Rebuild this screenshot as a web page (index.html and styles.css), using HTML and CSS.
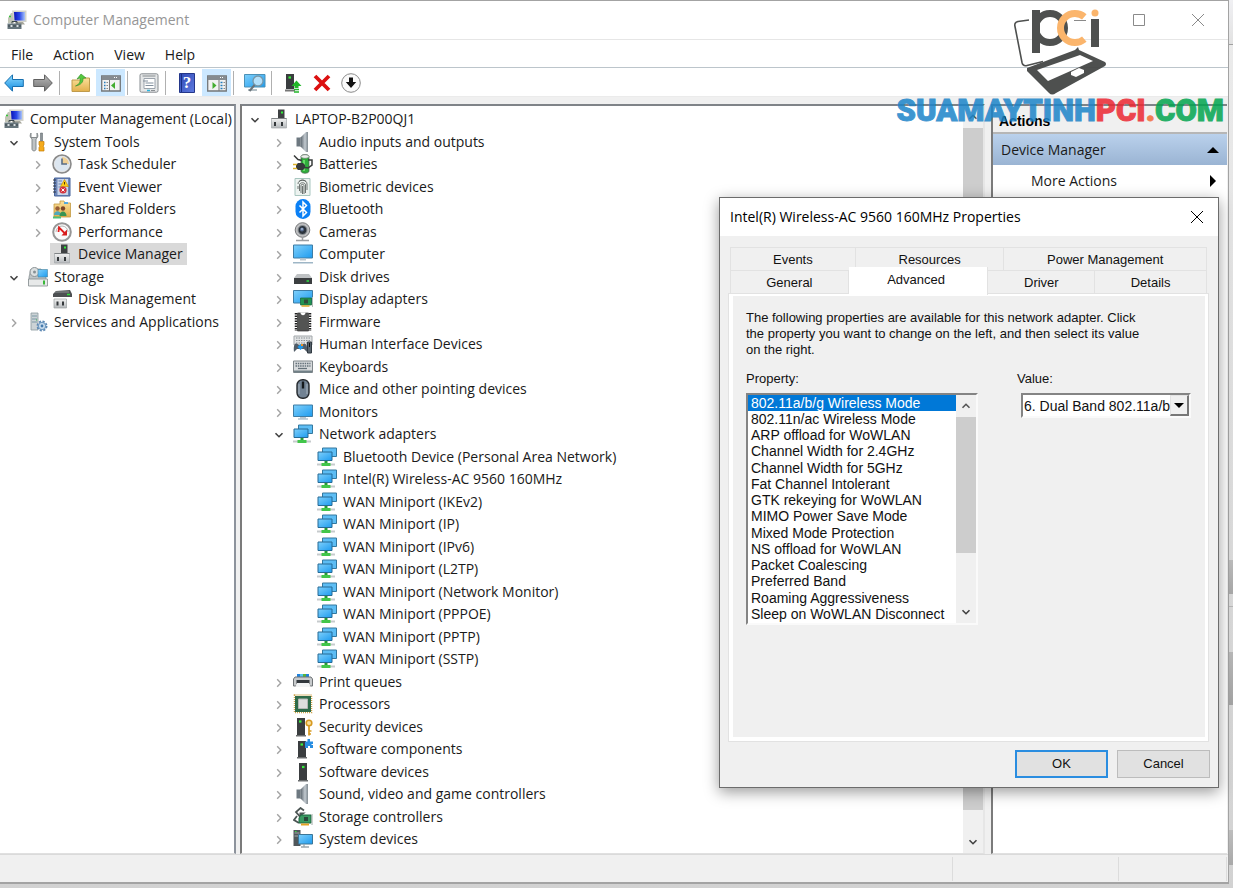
FILE: index.html
```html
<!DOCTYPE html>
<html lang="en">
<head>
<meta charset="utf-8">
<title>Computer Management</title>
<link rel="stylesheet" href="styles.css">
</head>
<body>
<svg class="sprite" aria-hidden="true">
  <defs>
    <linearGradient id="g-screen" x1="0" y1="0" x2="1" y2="1"><stop offset="0" stop-color="#7fd0fb"/><stop offset="1" stop-color="#1d9bef"/></linearGradient>
    <linearGradient id="g-navy" x1="0" y1="0" x2="1" y2="0"><stop offset="0" stop-color="#0a14b8"/><stop offset=".5" stop-color="#2b48e8"/><stop offset="1" stop-color="#a9c4f8"/></linearGradient>
    <linearGradient id="g-metal" x1="0" y1="0" x2="1" y2="0"><stop offset="0" stop-color="#59636b"/><stop offset=".6" stop-color="#c3cad0"/><stop offset="1" stop-color="#7b868e"/></linearGradient>
    <linearGradient id="g-silver" x1="0" y1="0" x2="0" y2="1"><stop offset="0" stop-color="#f2f2f2"/><stop offset="1" stop-color="#b4b8bb"/></linearGradient>
    <linearGradient id="g-folder" x1="0" y1="0" x2="0" y2="1"><stop offset="0" stop-color="#fbe09a"/><stop offset="1" stop-color="#e2b04c"/></linearGradient>
    <linearGradient id="g-arrow" x1="0" y1="0" x2="0" y2="1"><stop offset="0" stop-color="#8fdcff"/><stop offset="1" stop-color="#128be0"/></linearGradient>
    <linearGradient id="g-grey" x1="0" y1="0" x2="0" y2="1"><stop offset="0" stop-color="#b9b9b9"/><stop offset="1" stop-color="#727272"/></linearGradient>
    <linearGradient id="g-help" x1="0" y1="0" x2="1" y2="1"><stop offset="0" stop-color="#2f49b5"/><stop offset="1" stop-color="#5f7be0"/></linearGradient>
  </defs>
  <symbol id="i-right" viewBox="0 0 10 10"><path d="M3.2 1.3 6.8 5 3.2 8.700" fill="none" stroke="#a3a3a3" stroke-width="1.4"/></symbol>
  <symbol id="i-down" viewBox="0 0 10 10"><path d="M1.5 3.2 5 6.7 8.5 3.2" fill="none" stroke="#404040" stroke-width="1.6"/></symbol>
  <symbol id="i-up" viewBox="0 0 10 10"><path d="M1.5 6.8 5 3.3 8.5 6.8" fill="none" stroke="#555" stroke-width="1.6"/></symbol>
  <symbol id="i-mgmt" viewBox="0 0 20 20"><path d="M1 8 4 3h3v10H1z" fill="#c2c5b6"/><path d="M2 6.5h2" stroke="#35c43a" stroke-width="1.5"/><path d="M5 .5h14.5v11.500H7z" fill="#d3d3cb"/><path d="M7 2h11v8.500H7.500z" fill="url(#g-navy)"/><path d="M8 12h8l2 2.500H9z" fill="#a6a69b"/><path d="M.5 13.500h14V19H.5z" fill="#66757c"/><path d="M5 13.500v-2h5v2M1 16h13" stroke="#39454b" fill="none"/><path d="M3.500 15h2v2h-2zM9.500 15h2v2h-2z" fill="#d9dfe2"/></symbol>
  <symbol id="i-tools" viewBox="0 0 20 20"><path d="M3 1c-1 2-1.500 4 1 6v10c0 2.500 4 2.500 4 0V7c2.500-2 2-4 1-6v4.500H3z" fill="#bfc3c5" stroke="#7c8183" stroke-width=".9"/><path d="M12.500 1h2v8h-2z" fill="#8d9499" stroke="#555c60" stroke-width=".5"/><path d="M11 9.500h5V13l-1 1 1 1.500V19h-5v-3.500l1-1.500-1-1z" fill="#f5ab1c" stroke="#c67d00" stroke-width=".7"/></symbol>
  <symbol id="i-clock" viewBox="0 0 20 20"><circle cx="10" cy="10" r="8.800" fill="#dce6f0" stroke="#8a8a8a" stroke-width="2"/><circle cx="10" cy="10" r="7.700" fill="none" stroke="#eee" stroke-width=".8"/><path d="M10 10V3a7 7 0 0 1 7 7z" fill="#f0cf94"/><path d="M10 4.500V10h5" fill="none" stroke="#5a6d85" stroke-width="1.600"/></symbol>
  <symbol id="i-event" viewBox="0 0 20 20"><path d="M2.500 1h15.500v18H2.500z" fill="#6e87b9" stroke="#47649c"/><path d="M5.500 2H16v16H5.500z" fill="#c8d4e9"/><path d="M6.500 4H10M6.500 7H10M6.500 10H9" stroke="#6683b2"/><path d="m12.500 2.500 4 7h-8z" fill="#ffcd16" stroke="#c18a00" stroke-width=".6"/><path d="M12.500 5v2.500" stroke="#533b00"/><circle cx="11" cy="13" r="3.600" fill="#d5333e"/><path d="m9.500 11.500 3 3m0-3-3 3" stroke="#fff"/><path d="M1 3h3M1 6h3M1 9h3M1 12h3M1 15h3" stroke="#303744"/></symbol>
  <symbol id="i-shared" viewBox="0 0 20 20"><path d="M2 5h6V2h4l1 2h5.500v14H2z" fill="url(#g-folder)" stroke="#c39a43" stroke-width=".8"/><path d="M12 3h4v2h-4z" fill="#56aadc"/><circle cx="5.500" cy="9.500" r="2.200" fill="#985e37"/><circle cx="11" cy="9.500" r="2.200" fill="#7c4527"/><path d="M2 16c0-5 7-5 7 0z" fill="#50a7bb"/><path d="M7.500 17c0-6 7-6 7 0z" fill="#379452"/><path d="M1 18.500h8" stroke="#4fbf77" stroke-width="2"/></symbol>
  <symbol id="i-perf" viewBox="0 0 20 20"><circle cx="10" cy="10" r="8.800" fill="#fafafa" stroke="#969696" stroke-width="2"/><path d="M4 10a6 6 0 1 1 12 0" fill="none" stroke="#b3b3b3"/><path d="m6.500 10 .5-4.500 6 6" fill="none" stroke="#e11c1c" stroke-width="1.800"/><path d="M9.500 13.500H15V7.500z" fill="#d71b1b"/></symbol>
  <symbol id="i-device" viewBox="0 0 20 20"><path d="M9 .5h6.500V10H9z" fill="#3e4143"/><path d="M12 3.500h2" stroke="#30ee39" stroke-width="2"/><path d="M2.500 9.500h15V19h-15z" fill="url(#g-silver)" stroke="#a4a8aa" stroke-width=".7"/><path d="M2.500 9.500h15" stroke="#808486"/><path d="M5 13h2v4H5zM12 13h2v4h-2z" fill="#34383b"/></symbol>
  <symbol id="i-storage" viewBox="0 0 20 20"><path d="M3 2h10l5 9v6H1v-7z" fill="#bdc4c7" stroke="#82898c" stroke-width=".7"/><circle cx="6.500" cy="5" r="4.500" fill="#dce0e1" stroke="#8b9295"/><circle cx="6.500" cy="5" r="1.500" fill="#869095"/><path d="M10 2.500h9.500v7.500H10z" fill="url(#g-screen)" stroke="#48839d" stroke-width=".6"/><path d="M.5 12h19v7H.5z" fill="#e7e9e9" stroke="#848b8e" stroke-width=".8"/><path d="M16 13.500v4" stroke="#39b839" stroke-width="2"/></symbol>
  <symbol id="i-disk" viewBox="0 0 20 20"><path d="m4 2 14-1 2 4v3H1V5z" fill="#4d5052"/><path d="M3 3h14" stroke="#8e9293"/><path d="M15 5.500h3" stroke="#31e13c" stroke-width="1.500"/><path d="M2 10h12.500v9H2z" fill="url(#g-silver)" stroke="#9ba0a2" stroke-width=".7"/><path d="M4.500 12.500h2v4h-2zM10 12.500h2v4h-2z" fill="#34383b"/></symbol>
  <symbol id="i-services" viewBox="0 0 20 20"><path d="M3 1h7v17H3z" fill="#ccd3d6" stroke="#8b999f" stroke-width=".8"/><path d="M4 4h5M4 7h5M4 10h5" stroke="#7a98a5"/><path d="M8 8h1" stroke="#38bd4b"/><circle cx="14" cy="14" r="4.300" fill="#b7d0e7" stroke="#5d88b3" stroke-width="2.400" stroke-dasharray="2 1.370"/><circle cx="14" cy="14" r="3.600" fill="#c9dced" stroke="#709ac1"/><circle cx="14" cy="14" r="1.400" fill="#477bad"/></symbol>
  <symbol id="i-audio" viewBox="0 0 20 20"><path d="M3.500 5.500h4v9h-4z" fill="#6d7880"/><path d="m7.500 5.500 5.500-5.500h2v20h-2l-5.500-5.500z" fill="url(#g-metal)"/><path d="M14.500 0v20" stroke="#8c959b"/></symbol>
  <symbol id="i-battery" viewBox="0 0 20 20"><path d="M8 2.500C8 0 16 0 16 2.500V17c0 3-8 3-8 0z" fill="#2fac3b" stroke="#4a6150" stroke-width=".7"/><ellipse cx="12" cy="2.500" rx="4" ry="1.800" fill="#edf2ed" stroke="#777" stroke-width=".6"/><path d="M11 6v11" stroke="#7aea77" stroke-width="1.500"/><path d="M1 1.500l4 4 4 1M15 6h4v5l-4 3-5-1" fill="none" stroke="#393c3b" stroke-width="1.500"/><path d="M5 9h5l2 2v3l-2 2H5l-2-2v-3z" fill="#35393b"/><path d="M0 10.500h4M0 14.500h4" stroke="#ddb22b" stroke-width="1.500"/></symbol>
  <symbol id="i-finger" viewBox="0 0 20 20"><path d="M2 1.500h15v17H2z" fill="#edf3f0" stroke="#a8c6bf"/><path d="M5 7c0-5 9-5 9 0v6M6.500 14V8c0-3 6-3 6 0v8M8 16V8.500c0-1.500 3-1.500 3 0V17M9.500 9v8M5 9v3M6 4.500c2-2 5-2 7 0" fill="none" stroke="#4c5350" stroke-width=".8"/></symbol>
  <symbol id="i-bt" viewBox="0 0 20 20"><rect x="2.500" width="15" height="20" rx="7.300" fill="#0b80f5"/><path d="m6.500 6.500 7 7-3.500 3.500V3l3.500 3.500-7 7" fill="none" stroke="#fff" stroke-width="1.500"/></symbol>
  <symbol id="i-camera" viewBox="0 0 20 20"><circle cx="9.500" cy="8" r="7.300" fill="#bebfc1" stroke="#77797b"/><circle cx="9.500" cy="8" r="4.500" fill="#2b333c" stroke="#8e9396"/><circle cx="9" cy="7.500" r="2" fill="#596e92"/><circle cx="9" cy="7" r=".8" fill="#d6eaff"/><path d="M9.500 15v3M3 18.500h13" stroke="#9b9da0" stroke-width="1.500"/></symbol>
  <symbol id="i-computer" viewBox="0 0 20 20"><path d="M.5 1h19v13H.5z" fill="url(#g-screen)" stroke="#3e7da5"/><path d="M7 14.500h6v2H7z" fill="#bcc6cd"/><path d="M0 18h20v1.500H0z" fill="#9eb6c6"/></symbol>
  <symbol id="i-drive" viewBox="0 0 20 20"><path d="m4 7 12 0 3 4H1z" fill="#bfc2c4"/><path d="M1 11h18v6H1z" fill="#3b3e40"/><path d="M13.500 14h2.500" stroke="#2de340" stroke-width="1.500"/></symbol>
  <symbol id="i-display" viewBox="0 0 20 20"><path d="M.5 1.500h19V14H.5z" fill="url(#g-screen)" stroke="#3e7da5"/><path d="M7.500 9h11v7h-11z" fill="#239551" stroke="#17633a" stroke-width=".7"/><path d="M11 10.500h4v4h-4z" fill="#314d3b"/><path d="M8.500 17h8" stroke="#dda92b" stroke-width="1.500"/><path d="M19.500 8v10" stroke="#b5bbb6"/></symbol>
  <symbol id="i-chip" viewBox="0 0 20 20"><path d="M3 1v18M17 1v18" stroke="#222" stroke-width="2.500" stroke-dasharray="1.500 1"/><path d="M4.500 1h11v18h-11z" fill="#535453" stroke="#333" stroke-width=".7"/><path d="M7.500.5c0 3.500 5 3.500 5 0z" fill="#fff"/></symbol>
  <symbol id="i-hid" viewBox="0 0 20 20"><path d="M1 2h18v9H1z" fill="#e1e3e4" stroke="#a2a7aa"/><path d="M3 4h14M3 6.500h14M3 9h14" stroke="#8a9095" stroke-dasharray="1.500 1"/><path d="M1 18c-1-9 2-10 5-7h3c3-3 6-1 5 7l-3-3H4z" fill="#525d67"/><path d="m4.500 13 3-3 3 3-3 3z" fill="#1f97e8"/><path d="M8 10h2v2H8z" fill="#ef8f22"/><path d="M14.500 8h4v11h-4z" fill="#58636c" stroke="#303941"/><path d="M16.500 9v4" stroke="#111"/></symbol>
  <symbol id="i-keyboard" viewBox="0 0 20 20"><path d="M.5 4h19v11.500H.5z" fill="#d7dadc" stroke="#80878b"/><path d="M2.500 6.500h15M2.500 9h15" stroke="#64717a" stroke-width="1.300" stroke-dasharray="1.500 .8"/><path d="M5 11.500h9" stroke="#64717a" stroke-width="1.300"/><path d="M1 13.500h18v2H1z" fill="#718087"/></symbol>
  <symbol id="i-mouse" viewBox="0 0 20 20"><rect x="4" y=".7" width="12" height="18.600" rx="5.500" fill="#718293" stroke="#262a2e" stroke-width="1.400"/><path d="M6 5v10M14 5v10" stroke="#a8b3bd"/><path d="M10 2.500v7" stroke="#15191c" stroke-width="2.400"/></symbol>
  <symbol id="i-monitor" viewBox="0 0 20 20"><path d="M.5 3h19v11.500H.5z" fill="url(#g-screen)" stroke="#3e7da5"/><path d="M7 15h6v1.500H7z" fill="#bcc6cd"/><path d="M5 17h10" stroke="#8ba7ba"/></symbol>
  <symbol id="i-net" viewBox="0 0 20 20"><path d="M5.500 1h14v8.500h-14z" fill="#5dbdf4" stroke="#34799f"/><path d="M1 5h14v8.500H1z" fill="url(#g-screen)" stroke="#276b96"/><path d="M7.500 14h3v2h-3z" fill="#299b35"/><path d="M0 17.500h18" stroke="#c6cbcd" stroke-width="2"/><path d="M4.500 16h9v3h-9z" fill="#42c64a"/></symbol>
  <symbol id="i-printer" viewBox="0 0 20 20"><path d="M4 2h12v4H4z" fill="#1f82dd"/><path d="M7 2h3v4H7z" fill="#50c6ee"/><path d="M10 2h3v4h-3z" fill="#56b43a"/><path d="m2 5-1.500 2v7h19V7L18 5z" fill="#c7cacc" stroke="#6e7376"/><path d="M3.500 8h13v4h-13z" fill="#32383d"/><path d="M4 11h12l1.500 4h-15z" fill="#f2f4f5"/></symbol>
  <symbol id="i-cpu" viewBox="0 0 20 20"><path d="M1.500 1h17v17.500h-17z" fill="none" stroke="#cda34b" stroke-width="1.500" stroke-dasharray="1 1"/><path d="M2 2h16v16H2z" fill="#2e6b4a"/><path d="M5.500 5h9v9.500h-9z" fill="#ddd" stroke="#b4b7b5"/></symbol>
  <symbol id="i-key" viewBox="0 0 20 20"><path d="M4 1h8v17H4z" fill="#3a3d3f"/><path d="M3 18h10v1.500H3z" fill="#6a6d6e"/><path d="M6 4.500h2.500" stroke="#37ef3d" stroke-width="2.200"/><circle cx="16" cy="6" r="2.800" fill="#f8df9c" stroke="#d79a22" stroke-width="1.600"/><path d="M16 9v9.500M16 14h2.500M16 17h2" stroke="#d79a22" stroke-width="1.700"/></symbol>
  <symbol id="i-component" viewBox="0 0 20 20"><path d="M5 2h8v16H5z" fill="#3a3d3f"/><path d="M4 18h10v1.500H4z" fill="#6a6d6e"/><path d="M7.500 5.500H10" stroke="#37ef3d" stroke-width="2.200"/><path d="M12 2.500h2.500V0h2.500v2.500h3V5h-1.500v1H20v3h-3V7h-2v2h-3z" fill="#278de1"/></symbol>
  <symbol id="i-soft" viewBox="0 0 20 20"><path d="M6 1h8v17H6z" fill="#3a3d3f"/><path d="M5 18h10v1.500H5z" fill="#6a6d6e"/><path d="M9 5h2.500" stroke="#37ef3d" stroke-width="2.200"/></symbol>
  <symbol id="i-controller" viewBox="0 0 20 20"><path d="M11 3.500 7.500 1 3 5l3.500 4L10 6.500H6.500M4 9l-3 4 5 3" fill="none" stroke="#4c5554" stroke-width="1.800"/><path d="M8 8h10v8H6v-5z" fill="#3b9a62" stroke="#1c6840"/><path d="M11 10h4v4h-4z" fill="#29473a"/><path d="M8 17.500h8" stroke="#e4a426" stroke-width="2"/><path d="M19 7v11" stroke="#9ea8a5"/></symbol>
  <symbol id="i-system" viewBox="0 0 20 20"><path d="M.5 1h7v16h-7z" fill="#50575b"/><path d="M1.500 4h5M1.500 7h5" stroke="#a4abad"/><path d="M2 2.500h1.500" stroke="#38df43"/><path d="M5.500 5.500h14V15h-14z" fill="url(#g-screen)" stroke="#3c7697"/><path d="M11 15v3M8 18h8" stroke="#99a7ad" stroke-width="1.300"/></symbol>
  <symbol id="t-back" viewBox="0 0 20 20"><path d="M.7 10 8.500 1.800v4.700h10.800v7H8.500v4.700z" fill="url(#g-arrow)" stroke="#176fae"/></symbol>
  <symbol id="t-forward" viewBox="0 0 20 20"><path d="M19.300 10 11.500 1.800v4.700H.7v7h10.800v4.700z" fill="url(#g-grey)" stroke="#606060"/></symbol>
  <symbol id="t-folder" viewBox="0 0 20 20"><path d="M1 7h9l2-2h6.500v13.500H1z" fill="url(#g-folder)" stroke="#c09b4c"/><path d="M4.500 13C9 11 9.500 8 9 5L6 6l4-5 5 4-3 .3C12.500 9 10 12 4.500 13z" fill="#55c93f" stroke="#318b29" stroke-width=".6"/></symbol>
  <symbol id="t-tree" viewBox="0 0 20 20"><path d="M.7 3h18.600v15H.7z" fill="#f1f2f2" stroke="#73777a" stroke-width="1.300"/><path d="M1 3h18v4H1z" fill="#858b90"/><path d="M13 4.500h4" stroke="#fff" stroke-dasharray="1 1"/><path d="M8.500 7v11" stroke="#777"/><path d="M3 9.500h1.500M3 12.500h1.500M3 15.500h1.500" stroke="#247dbd" stroke-width="1.500"/><path d="M5.500 9.500H7M5.500 12.500H7M5.500 15.500H7" stroke="#888"/><path d="M14 9v7l-4-3.500z" fill="#43ad2f"/></symbol>
  <symbol id="t-pane" viewBox="0 0 20 20"><path d="M.7 3h18.600v15H.7z" fill="#f1f2f2" stroke="#73777a" stroke-width="1.300"/><path d="M1 3h18v4H1z" fill="#858b90"/><path d="M13 4.500h4" stroke="#fff" stroke-dasharray="1 1"/><path d="M12 7v11" stroke="#777"/><path d="M13.500 9.500h2M13.500 12.500h2M13.500 15.500h2" stroke="#247dbd" stroke-width="1.500"/><path d="M16.500 9.500H18M16.500 12.500H18M16.500 15.500H18" stroke="#888"/><path d="M5.500 9v7l4-3.500z" fill="#43ad2f"/></symbol>
  <symbol id="t-props" viewBox="0 0 20 20"><rect x="1" y=".8" width="18" height="18.400" rx="1.500" fill="#e5e7e8" stroke="#878c90"/><path d="M3.500 3h13" stroke="#9ba0a3" stroke-width="1.300"/><path d="M5 5.500h11v10H5z" fill="#fff" stroke="#9ba3ac"/><path d="M4 8h5M6.500 10h8M6.500 12.500h8" stroke="#82909e"/><path d="M8 17.500h3" stroke="#29b4df" stroke-width="1.500"/><path d="M12 17.500h4" stroke="#8a8f93"/></symbol>
  <symbol id="t-help" viewBox="0 0 20 20"><path d="M2.500.5h15v19h-15z" fill="url(#g-help)" stroke="#24378a"/><path d="M4.500 1v18" stroke="#182f84"/></symbol>
  <symbol id="t-scan" viewBox="0 0 22 20"><path d="M.5 1.500h20.500V14H.5z" fill="url(#g-screen)" stroke="#4b91b7"/><path d="M4 17h9" stroke="#9dabb3" stroke-width="1.500"/><circle cx="14" cy="8" r="5" fill="#c5e8fb" fill-opacity=".85" stroke="#7797a8" stroke-width="1.300"/><path d="m10.500 12-5 6" stroke="#68737a" stroke-width="2"/></symbol>
  <symbol id="t-update" viewBox="0 0 20 20"><path d="M3 1h8v15H3z" fill="#3a3d3f"/><path d="M2 16.500h10v2H2z" fill="#777"/><path d="M5.500 4.500H8" stroke="#37ef3d" stroke-width="2.200"/><path d="M13.500 7.500 18.500 13h-3v2h-4v-2h-3z" fill="#22b729"/><path d="M11 16.500h5M11 19h5" stroke="#22b729" stroke-width="1.500"/></symbol>
  <symbol id="t-remove" viewBox="0 0 20 20"><path d="m3 3 14 14M17 3 3 17" stroke="#dc1010" stroke-width="3.800"/></symbol>
  <symbol id="t-disable" viewBox="0 0 20 20"><circle cx="10" cy="10" r="9.300" fill="#fafafa" stroke="#8a8a8a"/><path d="M8 4.500h4V9h3.200L10 15 4.800 9H8z" fill="#111"/></symbol>
</svg>

<main class="window">
  <header class="titlebar">
    <svg class="icon"><use href="#i-mgmt"/></svg>
    <h1 class="titlebar-text">Computer Management</h1>
    <button class="caption" aria-label="Minimize"><svg viewBox="0 0 12 12"><path d="M0 6.500h12"/></svg></button>
    <button class="caption" aria-label="Maximize"><svg viewBox="0 0 12 12"><path d="M.5.5h11v11H.5z"/></svg></button>
    <button class="caption" aria-label="Close"><svg viewBox="0 0 12 12"><path d="m0 0 12 12M12 0 0 12"/></svg></button>
  </header>

  <nav class="menubar" aria-label="Menu">
    <button>File</button><button>Action</button><button>View</button><button>Help</button>
  </nav>

  <div class="toolbar" role="toolbar" aria-label="Tools">
    <button aria-label="Back"><svg class="icon"><use href="#t-back"/></svg></button>
    <button aria-label="Forward"><svg class="icon"><use href="#t-forward"/></svg></button>
    <span class="sep"></span>
    <button aria-label="Up one level"><svg class="icon"><use href="#t-folder"/></svg></button>
    <button class="on" aria-label="Show console tree"><svg class="icon"><use href="#t-tree"/></svg></button>
    <span class="sep"></span>
    <button aria-label="Properties"><svg class="icon"><use href="#t-props"/></svg></button>
    <span class="sep"></span>
    <button class="help" aria-label="Help"><svg class="icon"><use href="#t-help"/></svg><span class="help-mark">?</span></button>
    <button class="on" aria-label="Show action pane"><svg class="icon"><use href="#t-pane"/></svg></button>
    <span class="sep"></span>
    <button aria-label="Scan for hardware changes"><svg class="icon wide"><use href="#t-scan"/></svg></button>
    <span class="sep"></span>
    <button aria-label="Update driver"><svg class="icon"><use href="#t-update"/></svg></button>
    <button aria-label="Uninstall device"><svg class="icon"><use href="#t-remove"/></svg></button>
    <button aria-label="Disable device"><svg class="icon"><use href="#t-disable"/></svg></button>
  </div>

  <div class="panes">
    <nav class="pane console" aria-label="Console tree">
      <ul class="tree">
        <li class="root"><span class="entry"><svg class="icon"><use href="#i-mgmt"/></svg>Computer Management (Local)</span></li>
        <li><svg class="chev"><use href="#i-down"/></svg><span class="entry"><svg class="icon"><use href="#i-tools"/></svg>System Tools</span></li>
        <li class="l1"><svg class="chev"><use href="#i-right"/></svg><span class="entry"><svg class="icon"><use href="#i-clock"/></svg>Task Scheduler</span></li>
        <li class="l1"><svg class="chev"><use href="#i-right"/></svg><span class="entry"><svg class="icon"><use href="#i-event"/></svg>Event Viewer</span></li>
        <li class="l1"><svg class="chev"><use href="#i-right"/></svg><span class="entry"><svg class="icon"><use href="#i-shared"/></svg>Shared Folders</span></li>
        <li class="l1"><svg class="chev"><use href="#i-right"/></svg><span class="entry"><svg class="icon"><use href="#i-perf"/></svg>Performance</span></li>
        <li class="l1"><svg class="chev"></svg><span class="entry selected"><svg class="icon"><use href="#i-device"/></svg>Device Manager</span></li>
        <li><svg class="chev"><use href="#i-down"/></svg><span class="entry"><svg class="icon"><use href="#i-storage"/></svg>Storage</span></li>
        <li class="l1"><svg class="chev"></svg><span class="entry"><svg class="icon"><use href="#i-disk"/></svg>Disk Management</span></li>
        <li><svg class="chev"><use href="#i-right"/></svg><span class="entry"><svg class="icon"><use href="#i-services"/></svg>Services and Applications</span></li>
      </ul>
    </nav>

    <section class="pane devices" aria-label="Devices">
      <ul class="tree">
        <li><svg class="chev"><use href="#i-down"/></svg><span class="entry"><svg class="icon"><use href="#i-device"/></svg>LAPTOP-B2P00QJ1</span></li>
        <li class="l1"><svg class="chev"><use href="#i-right"/></svg><span class="entry"><svg class="icon"><use href="#i-audio"/></svg>Audio inputs and outputs</span></li>
        <li class="l1"><svg class="chev"><use href="#i-right"/></svg><span class="entry"><svg class="icon"><use href="#i-battery"/></svg>Batteries</span></li>
        <li class="l1"><svg class="chev"><use href="#i-right"/></svg><span class="entry"><svg class="icon"><use href="#i-finger"/></svg>Biometric devices</span></li>
        <li class="l1"><svg class="chev"><use href="#i-right"/></svg><span class="entry"><svg class="icon"><use href="#i-bt"/></svg>Bluetooth</span></li>
        <li class="l1"><svg class="chev"><use href="#i-right"/></svg><span class="entry"><svg class="icon"><use href="#i-camera"/></svg>Cameras</span></li>
        <li class="l1"><svg class="chev"><use href="#i-right"/></svg><span class="entry"><svg class="icon"><use href="#i-computer"/></svg>Computer</span></li>
        <li class="l1"><svg class="chev"><use href="#i-right"/></svg><span class="entry"><svg class="icon"><use href="#i-drive"/></svg>Disk drives</span></li>
        <li class="l1"><svg class="chev"><use href="#i-right"/></svg><span class="entry"><svg class="icon"><use href="#i-display"/></svg>Display adapters</span></li>
        <li class="l1"><svg class="chev"><use href="#i-right"/></svg><span class="entry"><svg class="icon"><use href="#i-chip"/></svg>Firmware</span></li>
        <li class="l1"><svg class="chev"><use href="#i-right"/></svg><span class="entry"><svg class="icon"><use href="#i-hid"/></svg>Human Interface Devices</span></li>
        <li class="l1"><svg class="chev"><use href="#i-right"/></svg><span class="entry"><svg class="icon"><use href="#i-keyboard"/></svg>Keyboards</span></li>
        <li class="l1"><svg class="chev"><use href="#i-right"/></svg><span class="entry"><svg class="icon"><use href="#i-mouse"/></svg>Mice and other pointing devices</span></li>
        <li class="l1"><svg class="chev"><use href="#i-right"/></svg><span class="entry"><svg class="icon"><use href="#i-monitor"/></svg>Monitors</span></li>
        <li class="l1"><svg class="chev"><use href="#i-down"/></svg><span class="entry"><svg class="icon"><use href="#i-net"/></svg>Network adapters</span></li>
        <li class="l2"><svg class="chev"></svg><span class="entry"><svg class="icon"><use href="#i-net"/></svg>Bluetooth Device (Personal Area Network)</span></li>
        <li class="l2"><svg class="chev"></svg><span class="entry"><svg class="icon"><use href="#i-net"/></svg>Intel(R) Wireless-AC 9560 160MHz</span></li>
        <li class="l2"><svg class="chev"></svg><span class="entry"><svg class="icon"><use href="#i-net"/></svg>WAN Miniport (IKEv2)</span></li>
        <li class="l2"><svg class="chev"></svg><span class="entry"><svg class="icon"><use href="#i-net"/></svg>WAN Miniport (IP)</span></li>
        <li class="l2"><svg class="chev"></svg><span class="entry"><svg class="icon"><use href="#i-net"/></svg>WAN Miniport (IPv6)</span></li>
        <li class="l2"><svg class="chev"></svg><span class="entry"><svg class="icon"><use href="#i-net"/></svg>WAN Miniport (L2TP)</span></li>
        <li class="l2"><svg class="chev"></svg><span class="entry"><svg class="icon"><use href="#i-net"/></svg>WAN Miniport (Network Monitor)</span></li>
        <li class="l2"><svg class="chev"></svg><span class="entry"><svg class="icon"><use href="#i-net"/></svg>WAN Miniport (PPPOE)</span></li>
        <li class="l2"><svg class="chev"></svg><span class="entry"><svg class="icon"><use href="#i-net"/></svg>WAN Miniport (PPTP)</span></li>
        <li class="l2"><svg class="chev"></svg><span class="entry"><svg class="icon"><use href="#i-net"/></svg>WAN Miniport (SSTP)</span></li>
        <li class="l1"><svg class="chev"><use href="#i-right"/></svg><span class="entry"><svg class="icon"><use href="#i-printer"/></svg>Print queues</span></li>
        <li class="l1"><svg class="chev"><use href="#i-right"/></svg><span class="entry"><svg class="icon"><use href="#i-cpu"/></svg>Processors</span></li>
        <li class="l1"><svg class="chev"><use href="#i-right"/></svg><span class="entry"><svg class="icon"><use href="#i-key"/></svg>Security devices</span></li>
        <li class="l1"><svg class="chev"><use href="#i-right"/></svg><span class="entry"><svg class="icon"><use href="#i-component"/></svg>Software components</span></li>
        <li class="l1"><svg class="chev"><use href="#i-right"/></svg><span class="entry"><svg class="icon"><use href="#i-soft"/></svg>Software devices</span></li>
        <li class="l1"><svg class="chev"><use href="#i-right"/></svg><span class="entry"><svg class="icon"><use href="#i-audio"/></svg>Sound, video and game controllers</span></li>
        <li class="l1"><svg class="chev"><use href="#i-right"/></svg><span class="entry"><svg class="icon"><use href="#i-controller"/></svg>Storage controllers</span></li>
        <li class="l1"><svg class="chev"><use href="#i-right"/></svg><span class="entry"><svg class="icon"><use href="#i-system"/></svg>System devices</span></li>
        <li class="l1"><svg class="chev"></svg><span class="entry"><svg class="icon"><use href="#i-soft"/></svg></span></li>
      </ul>
      <div class="scrollbar" aria-hidden="true">
        <svg class="chev"><use href="#i-up"/></svg><span class="thumb"></span><svg class="chev foot"><use href="#i-down"/></svg>
      </div>
    </section>

    <aside class="pane actions">
      <h2 class="actions-head">Actions</h2>
      <button class="actions-group">Device Manager<svg class="tri" viewBox="0 0 12 12"><path d="M0 9h12L6 3z"/></svg></button>
      <button class="actions-item">More Actions<svg class="tri" viewBox="0 0 12 12"><path d="M3 0v12l6-6z"/></svg></button>
    </aside>
  </div>

  <footer class="status"><span></span><span></span><span></span></footer>
</main>

<section class="dialog" role="dialog" aria-labelledby="dialog-title">
  <header class="dialog-title">
    <h2 id="dialog-title">Intel(R) Wireless-AC 9560 160MHz Properties</h2>
    <button class="dialog-close" aria-label="Close"><svg viewBox="0 0 12 12"><path d="m0 0 12 12M12 0 0 12"/></svg></button>
  </header>
  <div class="tabs" role="tablist">
    <div class="tab-row upper">
      <button role="tab">Events</button><button role="tab">Resources</button><button role="tab">Power Management</button>
    </div>
    <div class="tab-row lower">
      <button role="tab">General</button><button role="tab" class="active" aria-selected="true">Advanced</button><button role="tab">Driver</button><button role="tab">Details</button>
    </div>
  </div>
  <div class="panel" role="tabpanel">
    <p class="intro">The following properties are available for this network adapter. Click the property you want to change on the left, and then select its value on the right.</p>
    <div class="fields">
      <div class="field">
        <label for="property">Property:</label>
        <div class="listbox">
          <select id="property" size="14">
            <option selected>802.11a/b/g Wireless Mode</option>
            <option>802.11n/ac Wireless Mode</option>
            <option>ARP offload for WoWLAN</option>
            <option>Channel Width for 2.4GHz</option>
            <option>Channel Width for 5GHz</option>
            <option>Fat Channel Intolerant</option>
            <option>GTK rekeying for WoWLAN</option>
            <option>MIMO Power Save Mode</option>
            <option>Mixed Mode Protection</option>
            <option>NS offload for WoWLAN</option>
            <option>Packet Coalescing</option>
            <option>Preferred Band</option>
            <option>Roaming Aggressiveness</option>
            <option>Sleep on WoWLAN Disconnect</option>
          </select>
          <div class="scrollbar" aria-hidden="true">
            <svg class="chev"><use href="#i-up"/></svg><span class="thumb"></span><svg class="chev foot"><use href="#i-down"/></svg>
          </div>
        </div>
      </div>
      <div class="field value">
        <label for="value">Value:</label>
        <div class="combo">
          <select id="value"><option>6. Dual Band 802.11a/b</option></select>
          <span class="combo-arrow" aria-hidden="true"><svg viewBox="0 0 10 5"><path d="M0 0h10L5 5z"/></svg></span>
        </div>
      </div>
    </div>
  </div>
  <div class="dialog-buttons"><button class="default">OK</button><button>Cancel</button></div>
</section>

<div class="watermark">
  <svg class="watermark-logo" viewBox="0 0 96 88" role="img" aria-label="PCI">
    <path d="M18 12 7 13.500q-4 1-3 5l7 36q1 4 5 3l16-4" fill="none" stroke="#454746" stroke-width="1.600"/>
    <path fill="#454746" fill-rule="evenodd" d="m16 60 48-18 3-3 1 3 26 12q2 2 0 4L45 85q-4 3-7 0L16 63zM26 62l11 11 45-20-13-6zM60 64l8-4 5 2v3l-8 4-5-2z"/>
    <g fill="#454746"><rect x="21" y="2" width="8" height="43"/><rect x="80" y="11" width="8" height="28"/></g>
    <circle cx="39" cy="20" r="14.500" fill="none" stroke="#454746" stroke-width="7"/>
    <circle cx="64" cy="20" r="14.500" fill="none" stroke="#fbb265" stroke-width="7" pathLength="360" stroke-dasharray="260 100" stroke-dashoffset="-50"/>
    <circle cx="84" cy="5" r="3.500" fill="#fbb265"/>
  </svg>
  <div class="watermark-text"><span class="blue">SUAMAYTINH</span><span class="red">PCI</span><span class="orange">.</span><span class="green">COM</span></div>
</div>
</body>
</html>
```

FILE: styles.css
```css
* {
  box-sizing: border-box;
}

body {
  margin: 0;
  height: 100vh;
  position: relative;
  overflow: hidden;
  color: #1a1a1a;
  font: 14px/20px "Open Sans", "Noto Sans", sans-serif;
  background:
    linear-gradient(#f0f0f3, #e2e2e2) right 0 top 0 / 5px 44px no-repeat,
    linear-gradient(#a0a0a0, #a0a0a0) right 0 top 44px / 5px 1px no-repeat,
    linear-gradient(#bdbdbd, #a9a9a9) right 0 top 560px / 5px 34px no-repeat,
    linear-gradient(#b8b8b8, #b8b8b8) right 0 top 606px / 5px 1px no-repeat,
    linear-gradient(#b9b9b9, #a4a4a4) right 0 top 652px / 5px 53px no-repeat,
    linear-gradient(#bdbdbd, #a9a9a9) right 0 top 830px / 5px 35px no-repeat,
    linear-gradient(#ececec, #d2d2d2);
}

button,
select {
  margin: 0;
  padding: 0;
  border: 0;
  background: none;
  color: inherit;
  font: inherit;
}

h1,
h2,
p,
ul {
  margin: 0;
  padding: 0;
  font: inherit;
  list-style: none;
}

svg {
  display: block;
  flex: none;
}

.sprite {
  position: absolute;
  width: 0;
  height: 0;
}

.icon {
  width: 20px;
  height: 20px;
}

.icon.wide {
  width: 22px;
}

/* Main window */

.window {
  display: flex;
  flex-direction: column;
  height: calc(100vh - 4px);
  margin-right: 4px;
  border: solid #a3a3a3;
  border-width: 1px 1px 2px 0;
  background: #f0f0f0;
}

.titlebar {
  display: flex;
  align-items: center;
  flex: none;
  height: 39px;
  padding: 0 1px 0 7px;
  border-bottom: 1px solid #e6e6e6;
  background: #fff;
  color: #969696;
}

.titlebar-text {
  flex: 1;
  margin-left: 6px;
}

.caption {
  display: grid;
  place-items: center;
  width: 59px;
  height: 38px;
}

.caption svg {
  width: 12px;
  height: 12px;
  fill: none;
  stroke: #8a8a8a;
}

.menubar {
  display: flex;
  gap: 20px;
  flex: none;
  height: 28px;
  padding: 2px 11px 0;
  border-bottom: 1px solid #bcc5cb;
  background: #fff;
}

.toolbar {
  display: flex;
  gap: 1px;
  flex: none;
  height: 29px;
  padding-top: 1px;
  border-bottom: 1px solid #ebebeb;
  background: #fff;
}

.toolbar button {
  display: grid;
  place-items: center;
  width: 28px;
}

.toolbar .on {
  width: 29px;
  background: #cce8ff;
}

.toolbar .help > * {
  grid-area: 1 / 1;
}

.help-mark {
  color: #fff;
  font: bold 17px/20px "Liberation Serif", serif;
}

.sep {
  width: 1px;
  margin: 2px 6px 1px 1px;
  background: #b0b0b0;
}

/* Panes */

.panes {
  display: grid;
  grid-template-columns: 236px minmax(0, 1fr) 237px;
  flex: 1;
  min-height: 0;
  padding-top: 7px;
}

.pane {
  overflow: hidden;
  border-top: 2px solid #7f8388;
  border-bottom: 1px solid #e0e0e0;
  background: #fff;
}

.console {
  border-right: 2px solid #8d939c;
  padding: 2px 0 0 2px;
}

.devices {
  display: flex;
  margin: 0 6px 0 4px;
  border-left: 2px solid #7b7b7b;
  border-right: 2px solid #e6e6e6;
  padding-left: 1px;
}

.devices .tree {
  flex: 1;
  padding-top: 2px;
}

.tree li {
  display: flex;
  height: 22px;
  white-space: nowrap;
}

.tree li:nth-child(odd) {
  height: 23px;
}

.tree .l1 {
  padding-left: 24px;
}

.tree .l2 {
  padding-left: 48px;
}

.chev {
  width: 10px;
  height: 10px;
  margin: 7px;
}

.entry {
  display: flex;
  align-items: center;
  gap: 6px;
  height: 22px;
  padding: 0 4px 0 2px;
}

.selected {
  background: #d9d9d9;
}

.scrollbar {
  display: flex;
  flex-direction: column;
  align-items: center;
  flex: none;
  width: 20px;
  background: #f0f0f0;
}

.scrollbar .chev {
  margin: 6px 0;
}

.thumb {
  flex: 1;
  width: 100%;
  background: #cdcdcd;
}

.devices .thumb {
  margin-bottom: 21px;
}

.actions {
  display: flex;
  flex-direction: column;
  margin-right: 1px;
  border-left: 2px solid #7b7b7b;
}

.actions-head {
  height: 28px;
  padding: 5px 6px;
  border-bottom: 2px solid #b6b6b6;
  background: #f0f0f0;
  color: #000;
  font: bold 14px/20px "Liberation Sans", sans-serif;
}

.actions button {
  display: flex;
  align-items: center;
  justify-content: space-between;
  height: 31px;
  padding: 0 8px;
}

.actions .actions-group {
  background: linear-gradient(#bad1ec, #9ab4d3);
}

.actions .actions-item {
  padding-left: 38px;
}

.tri {
  width: 12px;
  height: 12px;
  fill: #000;
}

.status {
  display: flex;
  justify-content: flex-end;
  flex: none;
  height: 28px;
  padding: 2px 1px 1px 0;
  border-top: 1px solid #dadada;
}

.status span {
  width: 108px;
  border-right: 1px solid #dcdcdc;
}

.status span:nth-child(2) {
  width: 166px;
}

/* Properties dialog */

.dialog {
  position: absolute;
  top: 197px;
  right: 14px;
  width: 500px;
  border: 1px solid #6c6c6c;
  background: #f0f0f0;
  box-shadow: 0 4px 14px rgba(0, 0, 0, 0.4);
  color: #111;
  font: 13px/16px "Liberation Sans", Arial, sans-serif;
}

.dialog-title {
  display: flex;
  align-items: center;
  justify-content: space-between;
  height: 38px;
  padding: 0 15px 0 10px;
  background: #fff;
  color: #000;
  font: 14px/20px "Open Sans", "Noto Sans", sans-serif;
}

.dialog-close svg {
  width: 12px;
  height: 12px;
  fill: none;
  stroke: #000;
}

.tabs {
  margin: 11px 11px 0 10px;
}

.tab-row {
  display: grid;
  height: 23px;
  border: solid #e2e2e2;
  border-width: 1px 0 0 1px;
}

.upper {
  grid-template-columns: 125fr 149fr 203fr;
}

.lower {
  grid-template-columns: 118fr 140fr 107fr 112fr;
}

.tab-row button {
  padding-top: 2px;
  border-right: 1px solid #e2e2e2;
}

.tab-row .active {
  z-index: 1;
  margin: -4px 0 -2px;
  padding: 0 4px 2px 0;
  background: #fff;
}

.panel {
  height: 449px;
  margin: 0 9px 0 8px;
  padding: 14px 10px 0 13px;
  border: solid #fff;
  border-width: 3px 4px 5px 5px;
  outline: 1px solid #e2e2e2;
  outline-offset: -1px;
}

.intro {
  max-width: 410px;
}

.fields {
  display: flex;
  justify-content: space-between;
  align-items: flex-start;
  margin-top: 13px;
}

.field {
  display: flex;
  flex-direction: column;
  gap: 6px;
}

.listbox {
  display: flex;
  width: 232px;
  height: 232px;
  border: 2px solid;
  border-color: #848484 #fafafa #fafafa #848484;
  background: #fff;
}

.listbox select {
  flex: 1;
  height: 228px;
  overflow: hidden;
  outline: 0;
  border-radius: 0;
  font-size: 14px;
  scrollbar-width: none;
}

.listbox option {
  height: 16px;
  min-height: 16px;
  padding: 0 3px;
  color: #111;
  line-height: 16px;
}

.listbox option:nth-child(4n) {
  height: 17px;
}

.listbox option:checked {
  background: #0078d7 linear-gradient(#0078d7, #0078d7);
  color: #fff;
}

.listbox .thumb {
  margin-bottom: 48px;
}

.value {
  width: 178px;
}

.combo {
  display: flex;
  width: 170px;
  height: 25px;
  margin-left: 4px;
  border: 2px solid;
  border-color: #848484 #fafafa #fafafa #848484;
  background: #fff;
}

.combo select {
  appearance: none;
  flex: 1;
  min-width: 0;
  padding-left: 1px;
  overflow: hidden;
  font-size: 14px;
  text-overflow: clip;
}

.combo-arrow {
  display: grid;
  place-items: center;
  flex: none;
  width: 19px;
  border: solid;
  border-width: 1px 2px 2px 1px;
  border-color: #e3e3e3 #777 #777 #e3e3e3;
  background: #f0f0f0;
}

.combo-arrow svg {
  width: 10px;
  height: 5px;
}

.dialog-buttons {
  display: flex;
  justify-content: flex-end;
  gap: 9px;
  padding: 8px 8px 9px;
}

.dialog-buttons button {
  width: 93px;
  height: 28px;
  border: 1px solid #bcbcbc;
  background: #e1e1e1;
}

.dialog-buttons .default {
  border: 2px solid #2a8de0;
}

/* Site mark laid over the top right corner */

.watermark {
  position: absolute;
  top: 8px;
  right: 9px;
  pointer-events: none;
}

.watermark-logo {
  width: 96px;
  height: 88px;
  margin-left: 114px;
  opacity: 0.95;
}

.watermark-text {
  font: 900 31px/30px Roboto, sans-serif;
  -webkit-text-stroke: 1px;
  opacity: 0.85;
}

.blue {
  color: #1c84c9;
}

.red {
  color: #ec2732;
}

.orange {
  color: #f36b35;
}

.green {
  color: #02a550;
}
```
